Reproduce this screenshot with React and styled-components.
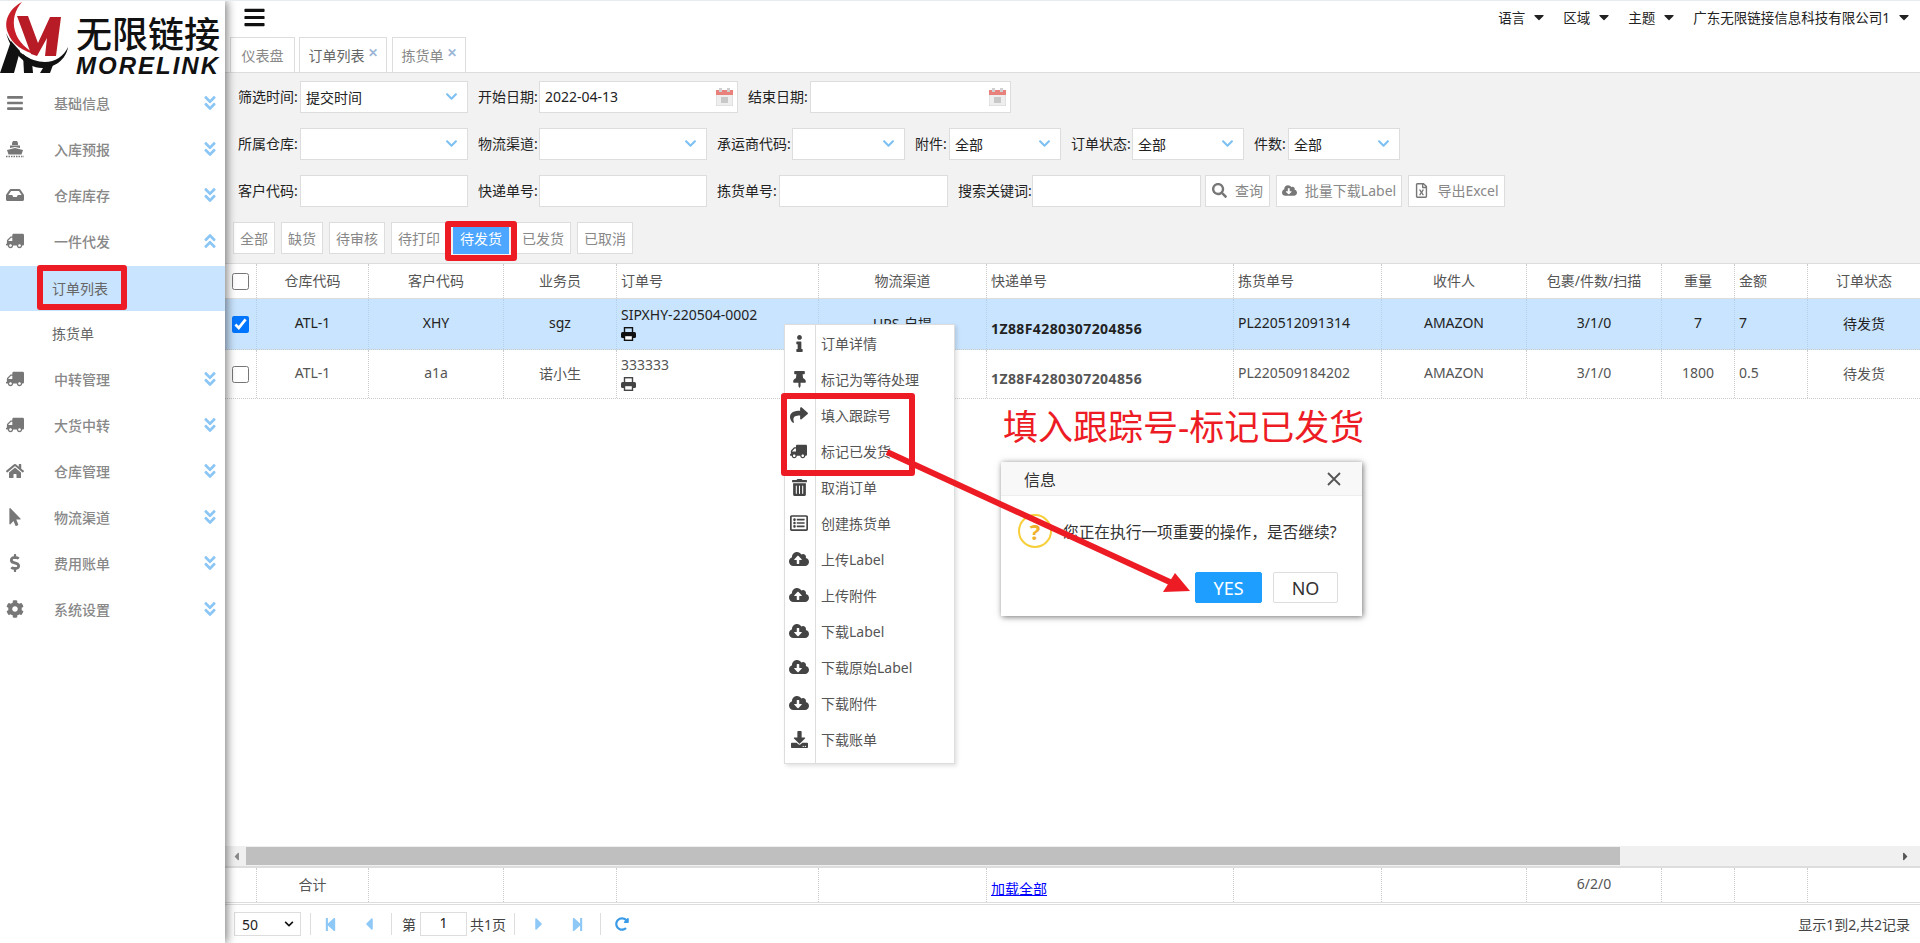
import * as React from 'react'
import styled, { createGlobalStyle } from 'styled-components'
import {
  FaAngleDoubleDown,
  FaAngleDoubleUp,
  FaBars,
  FaCaretDown,
  FaCaretLeft,
  FaCaretRight,
  FaChevronDown,
  FaCloudDownloadAlt,
  FaCloudUploadAlt,
  FaCog,
  FaDollarSign,
  FaDownload,
  FaHome,
  FaInbox,
  FaInfo,
  FaMousePointer,
  FaRedoAlt,
  FaRegFileExcel,
  FaRegListAlt,
  FaSearch,
  FaShare,
  FaStepBackward,
  FaStepForward,
  FaThumbtack,
  FaTrashAlt,
  FaTruck,
} from 'react-icons/fa'

const RED = '#ed1c24'
const COLUMNS = '32px 112px 135px 113px 202px 168px 247px 148px 145px 135px 73px 73px 1fr'

const GlobalStyle = createGlobalStyle`
  * {
    box-sizing: border-box;
  }
  html, body {
    margin: 0;
    height: 100%;
    overflow: hidden;
    background: #fff;
  }
  body {
    font-family: "Noto Sans", "Noto Sans CJK SC", sans-serif;
    font-size: 14px;
    color: #555;
  }
`

const Root = styled.div`
  position: relative;
  display: flex;
  width: 1920px;
  height: 943px;
  border-top: 1px solid #e8ecf1;
  overflow: hidden;
`

const Sidebar = styled.aside`
  position: relative;
  z-index: 2;
  flex: 0 0 225px;
  background: #fff;
  box-shadow: 2px 0 9px rgba(0, 0, 0, 0.5);
`

const Logo = styled.div`
  display: flex;
  height: 80px;
`

const LogoText = styled.div`
  display: flex;
  flex-direction: column;
  margin-left: 7px;
  padding-top: 14px;
  color: #111;
`

const LogoCn = styled.div`
  font-size: 36px;
  line-height: 40px;
  font-weight: 500;
  white-space: nowrap;
`

const LogoEn = styled.div`
  font-family: "Liberation Sans", sans-serif;
  font-size: 24px;
  line-height: 22px;
  font-weight: 700;
  font-style: italic;
  letter-spacing: 2px;
`

const MenuRow = styled.div`
  display: flex;
  align-items: center;
  height: 46px;
  padding-bottom: 2px;
  color: #888;
  font-weight: 500;
`

const MenuIcon = styled.span`
  display: flex;
  justify-content: center;
  width: 18px;
  margin-left: 6px;
  margin-right: 30px;
  color: #777;
  font-size: 18px;
  transform: ${(p) => (p.$flip ? 'scaleX(-1)' : 'none')};
`

const MenuLabel = styled.span`
  flex: 1;
`

const MenuArrow = styled.span`
  display: flex;
  margin-right: 6px;
  color: #8cc6f5;
  font-size: 18px;
`

const SubList = styled.div`
  padding: 1px 0;
`

const SubRow = styled.div`
  display: flex;
  align-items: center;
  height: 45px;
  padding: 0 0 2px 52px;
  background: ${(p) => (p.$active ? '#c9e4fe' : 'transparent')};
  color: #666;
`

const Main = styled.main`
  flex: 1;
  display: flex;
  flex-direction: column;
  min-width: 0;
`

const TopBar = styled.header`
  display: flex;
  align-items: center;
  justify-content: space-between;
  height: 36px;
  padding: 0 8px 4px 18px;
  color: #111;
`

const TopLinks = styled.nav`
  display: flex;
  align-items: center;
  gap: 16px;
  font-size: 13.5px;
  color: #222;
`

const TopLink = styled.span`
  display: flex;
  align-items: center;
  gap: 6px;
  white-space: nowrap;
`

const Tabs = styled.div`
  display: flex;
  height: 35px;
  padding-left: 5px;
  gap: 4px;
`

const Tab = styled.div`
  display: flex;
  align-items: center;
  justify-content: center;
  gap: 3px;
  width: ${(p) => p.$w}px;
  margin-right: ${(p) => p.$mr || 0}px;
  border: 1px solid #ddd;
  border-bottom: none;
  color: ${(p) => (p.$active ? '#666' : '#888')};
`

const TabClose = styled.span`
  margin-top: -5px;
  color: #9cb6d6;
  font-size: 12px;
  font-weight: 700;
`

const Filters = styled.section`
  display: flex;
  flex-direction: column;
  gap: 15px;
  height: 192px;
  padding: 8px 0 0 13px;
  border-top: 1px solid #ddd;
  border-bottom: 1px solid #ddd;
  background: #f2f2f2;
`

const FilterRow = styled.div`
  display: flex;
  gap: 10px;
  height: 32px;
`

const Field = styled.div`
  display: flex;
  align-items: center;
`

const FieldLabel = styled.label`
  width: ${(p) => p.$w}px;
  padding-bottom: 2px;
  color: #222;
  white-space: nowrap;
`

const Control = styled.div`
  display: flex;
  align-items: center;
  justify-content: space-between;
  width: ${(p) => p.$w}px;
  height: 32px;
  padding: 0 9px 1px 5px;
  border: 1px solid #ddd;
  background: #fff;
  color: #222;
  white-space: nowrap;
`

const Chevron = styled(FaChevronDown)`
  margin-top: -1px;
  color: #7cc0f4;
  font-size: 13px;
`

const CalendarIcon = styled.svg`
  width: 17px;
  height: 18px;
  margin-right: -5px;
`

const Actions = styled.div`
  display: flex;
  gap: 6px;
  margin-left: -6px;
`

const ActionButton = styled.button`
  display: flex;
  align-items: center;
  justify-content: center;
  gap: 8px;
  width: ${(p) => p.$w}px;
  height: 32px;
  padding: 0 0 2px;
  border: 1px solid #ddd;
  background: #fff;
  color: #888;
  font: inherit;
  white-space: nowrap;

  svg {
    color: #777;
    font-size: 15px;
  }
`

const StatusRow = styled.div`
  display: flex;
  gap: 6px;
  margin-left: -5px;
  height: 32px;
`

const StatusButton = styled.button`
  height: 32px;
  padding: 0 6px 1px;
  border: 1px solid ${(p) => (p.$active ? '#4da6ff' : '#ddd')};
  background: ${(p) => (p.$active ? '#4da6ff' : '#fff')};
  color: ${(p) => (p.$active ? '#fff' : '#888')};
  font: inherit;
  white-space: nowrap;
`

const TableArea = styled.div`
  flex: 1;
  min-height: 0;
`

const GridRow = styled.div`
  display: grid;
  grid-template-columns: ${COLUMNS};
  height: ${(p) => p.$h}px;
  border-bottom: ${(p) => p.$line};
  background: ${(p) => (p.$selected ? '#c9e4fe' : '#fff')};
  color: ${(p) => (p.$selected ? '#222' : '#555')};
`

const Cell = styled.div`
  display: flex;
  flex-direction: column;
  justify-content: center;
  align-items: ${(p) => (p.$left ? 'flex-start' : 'center')};
  padding: ${(p) => (p.$low ? '9px 4px 0' : '0 4px 3px')};
  border-right: 1px dotted ${(p) => (p.$selected ? '#b4d2ee' : '#ccc')};
  font-weight: ${(p) => (p.$low ? 700 : 400)};
  letter-spacing: ${(p) => (p.$low ? '0.4px' : 'normal')};
  white-space: nowrap;
  &:last-child {
    border-right: none;
  }
`

const LoadAll = styled.a`
  margin-top: 9px;
  color: #00f;
`

const CheckCell = styled(Cell)`
  padding: 0;
  input {
    width: 17px;
    height: 17px;
    margin: 0 0 0 -1px;
  }
`

const PrintIcon = styled.svg`
  width: 15px;
  height: 14px;
  margin-top: 3px;
`

const ScrollTrack = styled.div`
  display: flex;
  align-items: center;
  justify-content: space-between;
  height: 22px;
  padding: 0 8px 0 5px;
  border-bottom: 2px solid #ddd;
  background: #f0f0f0;
  color: #888;
  font-size: 13px;
`

const ScrollThumb = styled.div`
  width: 1374px;
  height: 18px;
  margin-left: 3px;
  margin-right: auto;
  background: #bfbfbf;
`

const Pager = styled.footer`
  display: flex;
  align-items: center;
  height: 38px;
  padding: 0 10px 0 9px;
  color: #444;
`

const PageSize = styled.div`
  display: flex;
  align-items: center;
  justify-content: space-between;
  width: 67px;
  height: 24px;
  padding: 0 6px 0 7px;
  border: 1px solid #ddd;
  color: #222;
  svg {
    font-size: 10px;
    color: #111;
  }
`

const PagerDivider = styled.span`
  width: 1px;
  height: 22px;
  margin: 0 ${(p) => p.$r || 0}px 0 ${(p) => p.$l || 0}px;
  background: #ddd;
`

const PagerIcon = styled.span`
  display: flex;
  justify-content: center;
  width: 16px;
  margin-right: ${(p) => p.$mr || 0}px;
  color: ${(p) => p.$color || '#8ec8f6'};
  font-size: ${(p) => p.$size || 15}px;
`

const PageInput = styled.div`
  width: 47px;
  height: 24px;
  margin: 0 3px 0 4px;
  border: 1px solid #ddd;
  color: #222;
  text-align: center;
  line-height: 20px;
`

const PagerInfo = styled.span`
  margin-left: auto;
`

const ContextMenu = styled.div`
  position: absolute;
  z-index: 3;
  left: 784px;
  top: 323px;
  width: 171px;
  height: 440px;
  border: 1px solid #ddd;
  background: linear-gradient(to right, #fff 30px, #ddd 30px, #ddd 31px, #fff 31px);
  box-shadow: 2px 2px 4px rgba(0, 0, 0, 0.12);
`

const ContextItem = styled.div`
  display: flex;
  align-items: center;
  height: 36px;
  color: #555;
`

const ContextIcon = styled.span`
  display: flex;
  justify-content: center;
  width: 28px;
  margin-right: 8px;
  color: #444;
  font-size: ${(p) => p.$size || 17}px;
  transform: ${(p) => (p.$flip ? 'scaleX(-1)' : 'none')};
`

const Note = styled.div`
  position: absolute;
  z-index: 3;
  left: 1003px;
  top: 402px;
  color: ${RED};
  font-size: 35px;
  line-height: 48px;
  white-space: nowrap;
`

const Dialog = styled.div`
  position: absolute;
  z-index: 3;
  left: 1001px;
  top: 461px;
  width: 361px;
  height: 154px;
  background: #fff;
  box-shadow: 1px 1px 6px rgba(0, 0, 0, 0.55);
`

const DialogHead = styled.div`
  display: flex;
  align-items: center;
  justify-content: space-between;
  height: 34px;
  padding: 0 21px 0 23px;
  border-bottom: 1px solid #eee;
  background: #f8f8f8;
  color: #333;
  font-size: 16px;
`

const DialogBody = styled.div`
  display: flex;
  align-items: center;
  gap: 11px;
  padding: 18px 0 0 17px;
  color: #333;
  font-size: 15.7px;
  white-space: nowrap;
`

const QuestionMark = styled.span`
  display: flex;
  align-items: center;
  justify-content: center;
  width: 34px;
  height: 34px;
  border: 2px solid #f6cf3a;
  border-radius: 50%;
  color: #efb12b;
  font-size: 22px;
  font-weight: 700;
`

const DialogButtons = styled.div`
  display: flex;
  justify-content: flex-end;
  gap: 11px;
  padding: 24px 24px 0 0;
`

const DialogButton = styled.button`
  width: ${(p) => p.$w}px;
  height: 31px;
  padding: 0;
  border: 1px solid ${(p) => (p.$primary ? '#1e9fff' : '#ddd')};
  border-radius: 2px;
  background: ${(p) => (p.$primary ? '#1e9fff' : '#fff')};
  color: ${(p) => (p.$primary ? '#fff' : '#333')};
  font: inherit;
  font-size: 18px;
`

const RedBox = styled.div`
  position: absolute;
  z-index: 4;
  left: ${(p) => p.$x}px;
  top: ${(p) => p.$y}px;
  width: ${(p) => p.$w}px;
  height: ${(p) => p.$h}px;
  border: 6px solid ${RED};
  border-radius: 3px;
`

const ArrowOverlay = styled.svg`
  position: absolute;
  z-index: 4;
  left: 0;
  top: 0;
  width: 1920px;
  height: 943px;
  pointer-events: none;
`

function ShipIcon() {
  return (
    <svg width="18" height="18" viewBox="0 0 18 18" fill="currentColor">
      <path d="M6 3L7 1H11L12 3V5H6Z" />
      <path d="M4 5.5H14V8L9 7L4 8Z" />
      <path d="M1 10L9 8L17 10L15.5 14.5H2.5Z" />
      <path d="M0 16.5H18" stroke="currentColor" strokeWidth="1.5" strokeDasharray="1.5 1" />
    </svg>
  )
}

const menuTop = [
  { icon: FaBars, label: '基础信息' },
  { icon: ShipIcon, label: '入库预报' },
  { icon: FaInbox, label: '仓库库存' },
]

const menuBottom = [
  { icon: FaTruck, label: '中转管理', flip: true },
  { icon: FaTruck, label: '大货中转', flip: true },
  { icon: FaHome, label: '仓库管理' },
  { icon: FaMousePointer, label: '物流渠道' },
  { icon: FaDollarSign, label: '费用账单' },
  { icon: FaCog, label: '系统设置' },
]

const contextItems = [
  { icon: FaInfo, label: '订单详情' },
  { icon: FaThumbtack, label: '标记为等待处理' },
  { icon: FaShare, label: '填入跟踪号', size: 18 },
  { icon: FaTruck, label: '标记已发货', flip: true },
  { icon: FaTrashAlt, label: '取消订单' },
  { icon: FaRegListAlt, label: '创建拣货单', size: 18 },
  { icon: FaCloudUploadAlt, label: '上传Label', size: 20 },
  { icon: FaCloudUploadAlt, label: '上传附件', size: 20 },
  { icon: FaCloudDownloadAlt, label: '下载Label', size: 20 },
  { icon: FaCloudDownloadAlt, label: '下载原始Label', size: 20 },
  { icon: FaCloudDownloadAlt, label: '下载附件', size: 20 },
  { icon: FaDownload, label: '下载账单' },
]

const orders = [
  {
    wh: 'ATL-1', customer: 'XHY', sales: 'sgz', no: 'SIPXHY-220504-0002', channel: 'UPS-自提',
    tracking: '1Z88F4280307204856', pick: 'PL220512091314', to: 'AMAZON', count: '3/1/0',
    weight: '7', amount: '7', status: '待发货', selected: true,
  },
  {
    wh: 'ATL-1', customer: 'a1a', sales: '诺小生', no: '333333', channel: '',
    tracking: '1Z88F4280307204856', pick: 'PL220509184202', to: 'AMAZON', count: '3/1/0',
    weight: '1800', amount: '0.5', status: '待发货',
  },
]

function MenuItem({ icon: Icon, label, flip, open }) {
  return (
    <MenuRow>
      <MenuIcon $flip={flip}><Icon /></MenuIcon>
      <MenuLabel>{label}</MenuLabel>
      <MenuArrow>{open ? <FaAngleDoubleUp /> : <FaAngleDoubleDown />}</MenuArrow>
    </MenuRow>
  )
}

function LogoMark() {
  return (
    <svg width="69" height="74" viewBox="0 0 69 74">
      <path d="M22 1C9 8 3 20 8 32C12 43 23 51 38 54C27 49 18 41 15 30C12 19 15 9 22 1Z" fill="#c8202a" />
      <path d="M17 15L28 15L38 42L50 16L61 16L56 55L45 55L47 37L37 55L31 53Z" fill="#b71c26" />
      <path d="M6 32C14 50 30 61 45 61C55 61 64 55 68 46C66 59 54 67 42 67C26 67 11 50 6 32Z" fill="#111" />
      <path d="M0 72L11 40L20 50L14 72Z" fill="#111" />
      <path d="M23 53L32 61L33 72L24 72Z" fill="#111" />
      <path d="M40 72L43 67L53 64L50 72Z" fill="#111" />
    </svg>
  )
}

function Calendar() {
  return (
    <CalendarIcon viewBox="0 0 17 18">
      <rect x="0" y="5" width="17" height="13" fill="#eeeeee" stroke="#d5d5d5" />
      <rect x="0" y="2" width="17" height="5" fill="#e8807c" />
      <rect x="3" y="0" width="3" height="4" fill="#d0d0d0" />
      <rect x="11" y="0" width="3" height="4" fill="#d0d0d0" />
      <rect x="5" y="9" width="7" height="6" fill="#c8c8c8" />
    </CalendarIcon>
  )
}

function Printer({ color }) {
  return (
    <PrintIcon viewBox="0 0 15 14">
      <rect x="3.5" y="0.7" width="8" height="5" fill="none" stroke={color} strokeWidth="1.4" />
      <rect x="0" y="5" width="15" height="6" rx="1.5" fill={color} />
      <rect x="3.5" y="8.5" width="8" height="4.8" fill="#fff" stroke={color} strokeWidth="1.4" />
    </PrintIcon>
  )
}

function FilterField({ label, labelW, w, children }) {
  return (
    <Field>
      <FieldLabel $w={labelW}>{label}:</FieldLabel>
      <Control $w={w}>{children}</Control>
    </Field>
  )
}

function OrderRow({ order }) {
  const s = order.selected
  return (
    <GridRow $h={s ? 51 : 49} $line="1px dotted #ccc" $selected={s}>
      <CheckCell $selected={s}>
        <input type="checkbox" defaultChecked={s} />
      </CheckCell>
      <Cell $selected={s}>{order.wh}</Cell>
      <Cell $selected={s}>{order.customer}</Cell>
      <Cell $selected={s}>{order.sales}</Cell>
      <Cell $selected={s} $left>
        {order.no}
        <Printer color={s ? '#111' : '#444'} />
      </Cell>
      <Cell $selected={s}>{order.channel}</Cell>
      <Cell $selected={s} $left $low>{order.tracking}</Cell>
      <Cell $selected={s} $left>{order.pick}</Cell>
      <Cell $selected={s}>{order.to}</Cell>
      <Cell $selected={s}>{order.count}</Cell>
      <Cell $selected={s}>{order.weight}</Cell>
      <Cell $selected={s} $left>{order.amount}</Cell>
      <Cell $selected={s}>{order.status}</Cell>
    </GridRow>
  )
}

export default function App() {
  return (
    <Root>
      <GlobalStyle />
      <Sidebar>
        <Logo>
          <LogoMark />
          <LogoText>
            <LogoCn>无限链接</LogoCn>
            <LogoEn>MORELINK</LogoEn>
          </LogoText>
        </Logo>
        {menuTop.map((item) => (
          <MenuItem key={item.label} {...item} />
        ))}
        <MenuItem icon={FaTruck} label="一件代发" flip open />
        <SubList>
          <SubRow $active>订单列表</SubRow>
          <SubRow>拣货单</SubRow>
        </SubList>
        {menuBottom.map((item) => (
          <MenuItem key={item.label} {...item} />
        ))}
      </Sidebar>

      <Main>
        <TopBar>
          <FaBars size={23} />
          <TopLinks>
            {['语言', '区域', '主题', '广东无限链接信息科技有限公司1'].map((name) => (
              <TopLink key={name}>
                {name}
                <FaCaretDown size={16} />
              </TopLink>
            ))}
          </TopLinks>
        </TopBar>

        <Tabs>
          <Tab $w={65}>仪表盘</Tab>
          <Tab $w={88} $mr={1} $active>
            订单列表<TabClose>✕</TabClose>
          </Tab>
          <Tab $w={74}>
            拣货单<TabClose>✕</TabClose>
          </Tab>
        </Tabs>

        <Filters>
          <FilterRow>
            <FilterField label="筛选时间" labelW={62} w={168}>提交时间<Chevron /></FilterField>
            <FilterField label="开始日期" labelW={61} w={199}>2022-04-13<Calendar /></FilterField>
            <FilterField label="结束日期" labelW={62} w={201}><span /><Calendar /></FilterField>
          </FilterRow>
          <FilterRow>
            <FilterField label="所属仓库" labelW={62} w={168}><span /><Chevron /></FilterField>
            <FilterField label="物流渠道" labelW={61} w={168}><span /><Chevron /></FilterField>
            <FilterField label="承运商代码" labelW={75} w={113}><span /><Chevron /></FilterField>
            <FilterField label="附件" labelW={34} w={112}>全部<Chevron /></FilterField>
            <FilterField label="订单状态" labelW={61} w={112}>全部<Chevron /></FilterField>
            <FilterField label="件数" labelW={34} w={112}>全部<Chevron /></FilterField>
          </FilterRow>
          <FilterRow>
            <FilterField label="客户代码" labelW={62} w={168} />
            <FilterField label="快递单号" labelW={61} w={168} />
            <FilterField label="拣货单号" labelW={62} w={169} />
            <FilterField label="搜索关键词" labelW={74} w={169} />
            <Actions>
              <ActionButton $w={65}><FaSearch />查询</ActionButton>
              <ActionButton $w={126}><FaCloudDownloadAlt />批量下载Label</ActionButton>
              <ActionButton $w={97}><FaRegFileExcel />导出Excel</ActionButton>
            </Actions>
          </FilterRow>
          <StatusRow>
            {['全部', '缺货', '待审核', '待打印', '待发货', '已发货', '已取消'].map((name) => (
              <StatusButton key={name} $active={name === '待发货'}>{name}</StatusButton>
            ))}
          </StatusRow>
        </Filters>

        <TableArea>
          <GridRow $h={35} $line="1px solid #ddd">
            <CheckCell><input type="checkbox" /></CheckCell>
            <Cell>仓库代码</Cell>
            <Cell>客户代码</Cell>
            <Cell>业务员</Cell>
            <Cell $left>订单号</Cell>
            <Cell>物流渠道</Cell>
            <Cell $left>快递单号</Cell>
            <Cell $left>拣货单号</Cell>
            <Cell>收件人</Cell>
            <Cell>包裹/件数/扫描</Cell>
            <Cell>重量</Cell>
            <Cell $left>金额</Cell>
            <Cell>订单状态</Cell>
          </GridRow>
          {orders.map((order) => (
            <OrderRow key={order.no} order={order} />
          ))}
        </TableArea>

        <ScrollTrack>
          <FaCaretLeft />
          <ScrollThumb />
          <FaCaretRight color="#555" />
        </ScrollTrack>

        <GridRow $h={37} $line="3px double #ddd">
          <Cell />
          <Cell>合计</Cell>
          <Cell />
          <Cell />
          <Cell />
          <Cell />
          <Cell $left><LoadAll href="#all">加载全部</LoadAll></Cell>
          <Cell />
          <Cell />
          <Cell>6/2/0</Cell>
          <Cell />
          <Cell />
          <Cell />
        </GridRow>

        <Pager>
          <PageSize>50<FaChevronDown /></PageSize>
          <PagerDivider $l={9} $r={11} />
          <PagerIcon $mr={23}><FaStepBackward /></PagerIcon>
          <PagerIcon><FaCaretLeft size={20} /></PagerIcon>
          <PagerDivider $l={14} $r={10} />
          第
          <PageInput>1</PageInput>
          共1页
          <PagerDivider $l={8} $r={16} />
          <PagerIcon $mr={22}><FaCaretRight size={20} /></PagerIcon>
          <PagerIcon><FaStepForward /></PagerIcon>
          <PagerDivider $l={15} $r={13} />
          <PagerIcon $color="#3a9be8" $size={14}><FaRedoAlt /></PagerIcon>
          <PagerInfo>显示1到2,共2记录</PagerInfo>
        </Pager>
      </Main>

      <ContextMenu>
        {contextItems.map(({ icon: Icon, label, flip, size }) => (
          <ContextItem key={label}>
            <ContextIcon $flip={flip} $size={size}><Icon /></ContextIcon>
            {label}
          </ContextItem>
        ))}
      </ContextMenu>

      <Note>填入跟踪号-标记已发货</Note>

      <Dialog>
        <DialogHead>
          信息
          <svg width="14" height="14" viewBox="0 0 14 14">
            <path d="M1 1L13 13M13 1L1 13" stroke="#555" strokeWidth="1.8" />
          </svg>
        </DialogHead>
        <DialogBody>
          <QuestionMark>?</QuestionMark>
          您正在执行一项重要的操作，是否继续?
        </DialogBody>
        <DialogButtons>
          <DialogButton $w={67} $primary>YES</DialogButton>
          <DialogButton $w={65}>NO</DialogButton>
        </DialogButtons>
      </Dialog>

      <RedBox $x={37} $y={264} $w={90} $h={45} />
      <RedBox $x={445} $y={220} $w={72} $h={40} />
      <RedBox $x={781} $y={392} $w={134} $h={83} />
      <ArrowOverlay viewBox="0 0 1920 943">
        <line x1="887" y1="451" x2="1172" y2="582" stroke={RED} strokeWidth="6" />
        <polygon points="1190,590 1163,591 1175,572" fill={RED} />
      </ArrowOverlay>
    </Root>
  )
}
